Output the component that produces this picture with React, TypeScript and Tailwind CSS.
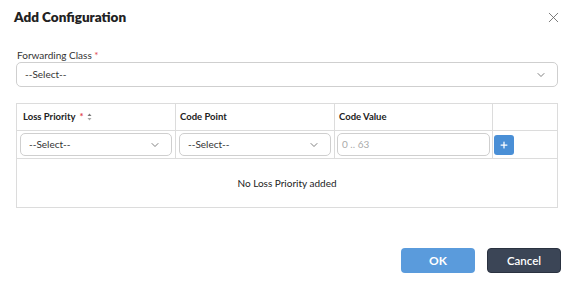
import React from 'react';
import { X, ChevronDown, Plus } from 'lucide-react';

const SelectBox: React.FC<{ className?: string }> = ({ className }) => (
  <div
    className={`flex items-center justify-between border border-[#cfcfcf] rounded-[5px] bg-white pl-[8px] pr-[10px] text-[10px] text-[#333] ${className ?? ''}`}
  >
    <span>--Select--</span>
    <ChevronDown className="w-[12px] h-[12px] text-[#555]" strokeWidth={1.5} />
  </div>
);

export default function App() {
  return (
    <div
      className="w-[575px] h-[281px] bg-white relative"
      style={{ fontFamily: 'Lato, "Open Sans", sans-serif' }}
    >
      {/* Header */}
      <div className="flex items-center justify-between pl-[14px] pr-[13px] h-[34px]">
        <h1 className="text-[13.5px] font-extrabold text-[#222]">Add Configuration</h1>
        <X className="w-[17px] h-[17px] text-[#666]" strokeWidth={1.2} />
      </div>

      {/* Forwarding class */}
      <div className="px-[16px] mt-[15px] pr-[17px]">
        <label className="block text-[10px] text-[#333] leading-[12px] ml-[1px]">
          Forwarding Class <span className="text-[#e0474c]">*</span>
        </label>
        <SelectBox className="mt-[1px] h-[25px]" />
      </div>

      {/* Table */}
      <div className="mx-[16px] mr-[17px] mt-[16px] border border-[#dcdcdc]">
        <div className="grid grid-cols-[159px_159px_158px_1fr] h-[27px] border-b border-[#dcdcdc]">
          <div className="flex items-center pl-[6px] text-[9.5px] font-bold text-[#222] border-r border-[#dcdcdc]">
            Loss Priority <span className="text-[#e0474c] ml-[4px]">*</span>
            <svg className="ml-[3px]" width="5" height="8" viewBox="0 0 5 8">
              <path d="M2.5 0.5 L4.5 3 L0.5 3 Z" fill="#777" />
              <path d="M2.5 7.5 L4.5 5 L0.5 5 Z" fill="#aaa" />
            </svg>
          </div>
          <div className="flex items-center pl-[4px] text-[9.5px] font-bold text-[#222] border-r border-[#dcdcdc]">
            Code Point
          </div>
          <div className="flex items-center pl-[4px] text-[9.5px] font-bold text-[#222] border-r border-[#dcdcdc]">
            Code Value
          </div>
          <div />
        </div>
        <div className="grid grid-cols-[159px_159px_158px_1fr] h-[28px] border-b border-[#dcdcdc]">
          <div className="flex items-center px-[3px] border-r border-[#dcdcdc]">
            <SelectBox className="w-full h-[23px]" />
          </div>
          <div className="flex items-center px-[3px] border-r border-[#dcdcdc]">
            <SelectBox className="w-full h-[23px]" />
          </div>
          <div className="flex items-center px-[2px] border-r border-[#dcdcdc]">
            <div className="w-full h-[23px] border border-[#cfcfcf] rounded-[5px] flex items-center pl-[4px] text-[10px] text-[#aaa]">
              0 .. 63
            </div>
          </div>
          <div className="flex items-center pl-[1px]">
            <div className="w-[20px] h-[20px] rounded-[3px] bg-[#4a8fd6] flex items-center justify-center">
              <Plus className="w-[10px] h-[10px] text-white" strokeWidth={3} />
            </div>
          </div>
        </div>
        <div className="h-[48px] flex items-center justify-center text-[10px] text-[#222]">
          No Loss Priority added
        </div>
      </div>

      {/* Footer */}
      <div className="flex justify-end gap-[12px] pr-[14px] mt-[40px]">
        <button className="w-[74px] h-[25px] rounded-[4px] bg-[#5a9bdc] text-white text-[12px] font-bold">
          OK
        </button>
        <button className="w-[74px] h-[25px] rounded-[4px] bg-[#3b4556] border border-[#2a3240] text-white text-[11.5px] font-semibold">
          Cancel
        </button>
      </div>
    </div>
  );
}
